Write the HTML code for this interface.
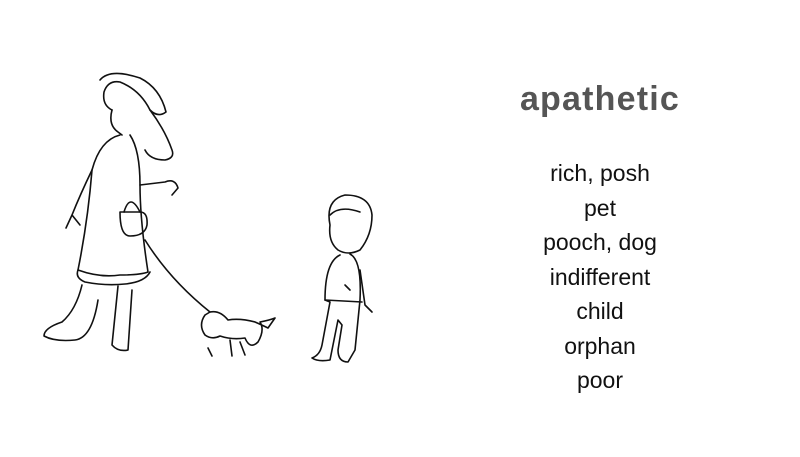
<!DOCTYPE html>
<html><head><style>
html,body{margin:0;padding:0;background:#fff;width:800px;height:457px;overflow:hidden;position:relative;font-family:"Liberation Sans",sans-serif}
.t{position:absolute;left:480px;width:240px;text-align:center;top:80px;font-size:34px;font-weight:bold;color:#555;letter-spacing:1.2px}
.l{position:absolute;left:480px;width:240px;text-align:center;top:156px;font-size:23px;line-height:34.5px;color:#111}
svg{position:absolute;left:0;top:0}
</style></head><body>
<svg width="800" height="457" fill="none" stroke="#111" stroke-width="1.6" stroke-linecap="round" stroke-linejoin="round">
<path d="M100 80 Q110 68 140 78 Q160 88 166 112 Q158 118 150 110 Q140 90 120 82 Q108 80 104 92 Q102 105 112 110"/>
<path d="M150 110 Q165 130 172 150 Q175 158 165 160 Q150 160 145 150"/>
<path d="M112 110 Q108 125 118 132 L122 135"/>
<path d="M120 135 Q100 140 92 170 Q88 220 78 270 Q100 278 120 275 Q140 275 148 272 Q140 220 140 185 Q140 150 130 135"/>
<path d="M140 185 L165 182 Q175 178 178 188 L172 195"/>
<path d="M92 170 Q80 195 72 215 L66 228 M72 215 L80 225"/>
<path d="M78 270 Q75 278 85 282 Q105 286 125 284 Q145 282 150 272"/>
<path d="M82 285 Q76 310 62 322 Q44 328 44 336 Q55 342 75 340 Q92 338 98 300"/>
<path d="M118 286 L112 345 Q118 352 128 350 L132 290"/>
<path d="M120 212 Q120 236 130 236 Q145 236 147 225 Q148 212 140 212 Z"/>
<path d="M124 212 Q130 192 140 212"/>
<path d="M145 240 Q170 280 210 312"/>
<path d="M205 315 Q198 325 205 335 Q212 340 220 336 Q232 340 245 338 Q250 350 258 342 Q265 330 260 322 Q270 320 275 318 L268 328 Q262 325 255 322 Q240 318 228 320 Q220 310 210 312 Z"/>
<path d="M208 348 L212 356 M230 340 L232 356 M240 342 L245 355"/>
<path d="M330 225 Q325 200 345 195 Q370 195 372 215 Q372 235 360 250 Q348 256 338 250 Q328 242 330 225 Z"/>
<path d="M330 215 Q340 205 360 212"/>
<path d="M340 255 Q325 262 325 300 L330 302 L322 345 Q320 355 312 358 Q318 362 330 360 L338 320 L342 325 L338 350 Q338 362 348 362 L355 350 L360 300 Q362 260 350 254"/>
<path d="M325 300 L362 302 M345 285 L350 290"/>
<path d="M360 270 L365 305 L372 312"/>
</svg>
<div class="t">apathetic</div>
<div class="l">rich, posh<br>pet<br>pooch, dog<br>indifferent<br>child<br>orphan<br>poor</div>
</body></html>
